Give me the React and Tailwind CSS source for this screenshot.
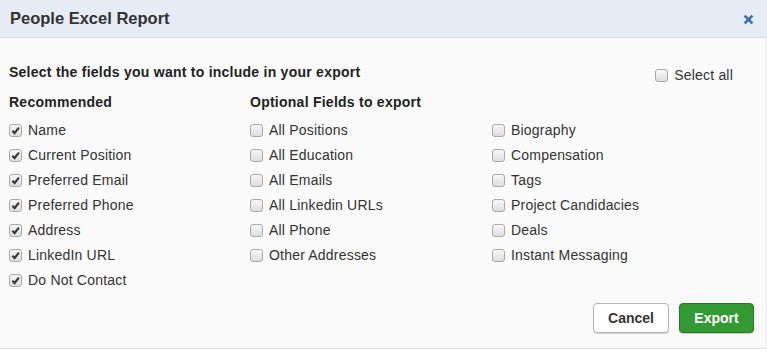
import React from "react";

const recommended = [
  "Name",
  "Current Position",
  "Preferred Email",
  "Preferred Phone",
  "Address",
  "LinkedIn URL",
  "Do Not Contact",
];
const optionalA = [
  "All Positions",
  "All Education",
  "All Emails",
  "All Linkedin URLs",
  "All Phone",
  "Other Addresses",
];
const optionalB = [
  "Biography",
  "Compensation",
  "Tags",
  "Project Candidacies",
  "Deals",
  "Instant Messaging",
];

function Box({ checked }) {
  return (
    <span className="w-[13px] h-[13px] shrink-0 rounded-[3px] border border-[#a9a9a9] bg-gradient-to-b from-[#f7f7f7] to-[#dedede] flex items-center justify-center">
      {checked && (
        <svg width="9" height="9" viewBox="0 0 10 10">
          <path d="M1.5 5.2 L4 7.8 L8.8 1.8" fill="none" stroke="#3a3a3a" strokeWidth="2.4" />
        </svg>
      )}
    </span>
  );
}

function Field({ label, checked }) {
  return (
    <div className="h-[25px] flex items-center gap-[6px]">
      <Box checked={checked} />
      <span className="text-[14px] tracking-[0.2px] text-[#333]">{label}</span>
    </div>
  );
}

export default function App() {
  return (
    <div className="w-[767px] h-[352px] bg-white font-['Liberation_Sans',Arial,sans-serif]">
      <div className="h-[349px] bg-[#fafafa] border-b border-[#dcdcdc] border-r border-r-[#e8e8e8] flex flex-col">
        <div className="h-[38px] bg-[#e5ecf5] border-b border-[#d9d9d9] px-[10px] flex items-center justify-between shrink-0">
          <h1 className="text-[16.5px] font-bold text-[#333]">People Excel Report</h1>
          <svg width="11" height="11" viewBox="0 0 10 10" className="mr-[2px] mt-[1px]">
            <path d="M1.5 1.5 L8.5 8.5 M8.5 1.5 L1.5 8.5" stroke="#3b6ea8" strokeWidth="2.4" />
          </svg>
        </div>

        <div className="px-[9px] pt-[26px] flex-1 flex flex-col">
          <div className="flex justify-between items-start">
            <p className="text-[14px] tracking-[0.25px] font-bold text-[#222] leading-[16px]">
              Select the fields you want to include in your export
            </p>
            <div className="flex items-center gap-[6px] mr-[24px] mt-[1px]">
              <Box />
              <span className="text-[14px] tracking-[0.2px] text-[#333]">Select all</span>
            </div>
          </div>

          <div className="flex mt-[8px]">
            <div className="w-[241px]">
              <h2 className="text-[14px] tracking-[0.25px] font-bold text-[#222] h-[16px] leading-[16px] mb-[8px]">Recommended</h2>
              {recommended.map((f) => (
                <Field key={f} label={f} checked />
              ))}
            </div>
            <div className="w-[242px]">
              <h2 className="text-[14px] tracking-[0.25px] font-bold text-[#222] h-[16px] leading-[16px] mb-[8px]">Optional Fields to export</h2>
              {optionalA.map((f) => (
                <Field key={f} label={f} />
              ))}
            </div>
            <div className="pt-[24px]">
              {optionalB.map((f) => (
                <Field key={f} label={f} />
              ))}
            </div>
          </div>

          <div className="flex justify-end gap-[10px] pr-[3px] mt-[10px]">
            <button className="w-[76px] h-[30px] rounded-[4px] border border-[#b5b5b5] bg-white text-[14px] font-bold text-[#333] shadow-[0_1px_1px_rgba(0,0,0,0.15)]">
              Cancel
            </button>
            <button className="w-[75px] h-[30px] rounded-[4px] border border-[#267a26] bg-[#339933] text-[14px] font-bold text-white shadow-[0_1px_1px_rgba(0,0,0,0.2)]">
              Export
            </button>
          </div>
        </div>
      </div>
    </div>
  );
}
